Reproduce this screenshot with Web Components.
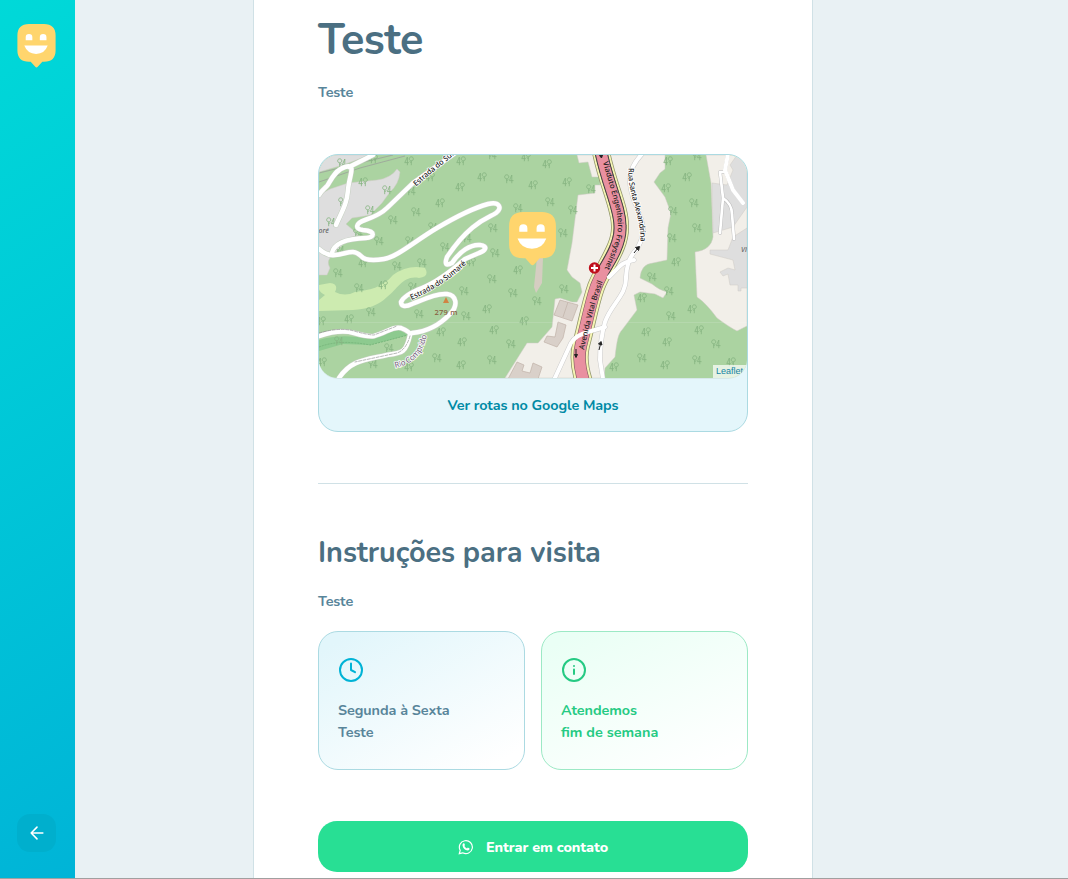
<!DOCTYPE html>
<html lang="pt-BR"><head><meta charset="utf-8"><title>Happy</title>
<style>
html,body{margin:0;height:100%;overflow:hidden}
body{font-family:Nunito,Lato,sans-serif;font-weight:700;font-size:14.4px;letter-spacing:-.07px;color:#58859a;background:#e9f1f4}
</style></head><body>
<happy-app></happy-app>
<script>
const define=(name,html,setup)=>customElements.define(name,class extends HTMLElement{
  constructor(){super();const t=document.createElement('template');t.innerHTML=html;this.attachShadow({mode:'open'}).append(t.content.cloneNode(true));if(setup)setup(this.shadowRoot)}
});

define('happy-face',`<style>:host{display:block}svg{display:block;width:100%;height:100%}</style>
<svg viewBox="0 0 46 53"><path fill="#ffd56d" d="M14 0H32Q46 0 46 14V32Q46 45.500 32 45.500H30L24.500 51.500Q23 53 21.500 51.500L16 45.500H14Q0 45.500 0 32V14Q0 0 14 0Z"/><path fill="#fff" d="M10 19.500V16a4 4 0 0 1 8 0v3.500ZM27 19.500V16a4 4 0 0 1 8 0v3.500ZM8.300 26H36.500Q33 36 22.500 36T8.300 26Z"/></svg>`);

define('side-bar',`<style>:host{display:flex;flex-direction:column;justify-content:space-between;align-items:center;box-sizing:border-box;padding:24px 2px 26px 0;background:linear-gradient(329.540deg,#00b4d7,#00d9d8)}
happy-face{width:39px;height:44px}
button{width:39px;height:38px;border:0;border-radius:13px;background:#00afcd;padding:0;display:grid;place-items:center}
svg{width:20px;height:20px;fill:none;stroke:#fff;stroke-width:1.9;stroke-linecap:round;stroke-linejoin:round}</style>
<happy-face></happy-face><button aria-label="Voltar"><svg viewBox="0 0 24 24"><path d="M19 12H5M12 19l-7-7 7-7"/></svg></button>`);

define('street-map',`<style>:host{display:block;position:relative;height:223px;border-radius:19px;overflow:hidden;border-bottom:1px solid #d6e8ea;letter-spacing:0}
svg{display:block;width:428px;height:223px}
happy-face{position:absolute;left:190px;top:57px;width:47px;height:54px}
a{position:absolute;right:0;bottom:0;height:13px;padding:0 4px 0 3px;background:#ffffffb3;color:#1584a3;font:9px/13px "Liberation Sans",sans-serif}
text{font-family:"Noto Sans",sans-serif;font-weight:500;font-size:7.600px;paint-order:stroke;fill:#222}
.halo{stroke:#fff;stroke-width:1.500px}
.road{fill:none;stroke-linecap:round;stroke-linejoin:round}
</style>
<svg viewBox="319 155 428 223">
<defs>
<g id="a" fill="none" stroke="#86b582" stroke-width=".85"><path d="M-2.300 4.200V-.2M-2.300-.2C-5-.2-5-4.200-2.300-4.200S.4-.2-2.300-.2M-2.300 2L-.8 .3M2.800 4.200V-4L.4 1.600H4.500"/></g>
<g id="b" fill="none" stroke="#86b582" stroke-width=".85"><path d="M2.300 4.200V-.2M2.300-.2C-.4-.2-.4-4.200 2.300-4.200S5-.2 2.300-.2M2.300 2L.8 .3M-1.600 4.200V-4L-4.200 1.600H-.2"/></g>
<path id="p1" d="M416 186.500Q436 169 458 152L475 141"/>
<path id="p2" d="M411.500 300Q445 285 466 264"/>
<path id="p3" d="M395 368Q424 362 427 332"/>
<path id="p4" d="M603 162C609 187 618 206 618 227C617 241 611 254 604 270"/>
<path id="p5" d="M584 350Q592 311 603 281"/>
<path id="p6" d="M628.500 168C627 196 641 212 640.500 243"/>
<g id="left">
<path d="M319 195C322 190 324 189 327 186S333 171 345 167S349 176 348 190S342 211 336 225M349 167L373 155"/>
<path d="M458 151L413 183L387 208Q380 215 365 220C356 223 354 229 363 230C377 231 374 238 366 238Q335 239 332 253"/>
<path d="M319 249Q327 256 335 255C347 254 353 248 361 256Q366 262 384 259C397 257 415 241 437 228S477 207 488 204S503 208 496 213S471 221 447 257Q443 268 452 263C460 251 471 244 480 245S485 251 479 253L465 259Q440 281 422 288T401 302C401 307 406 307 412 304C427 298 438 293 447 294S459 305 450 314Q434 331 412 333"/>
<path d="M319 336Q340 329 354 333T374 336C386 333 393 326 401 328Q411 332 410 335C406 353 402 353 387 355C365 360 351 360 339 378"/>
</g>
<g id="right">
<path d="M642 154C626 171 628 184 635 203C647 230 644 236 637 249Q627 258 626 277C627 295 611 304 605 322Q600 340 600 360L603 379"/>
<path d="M634 260Q624 262 620 266L609 277M554 380L571 343Q576 335 588 332L605 327"/>
</g>
<path id="trunk" d="M601 152C608 186 620 207 620 226C621 247 604 266 596 287C590 304 586 327 581 345Q577 361 584 382"/>
</defs>
<path fill="#abd3a1" d="M319 155H747V378H319Z"/>
<g stroke="#cfcac5" stroke-width=".5">
<path fill="#dedede" d="M319 195L330 189L348 183L377 180Q391 178 397 169L400 172Q399 184 390 192L382 203L370 215Q360 217 352 218L346 224L353 230L358 235L347 240L335 253Q325 260 330 268L327 275H319ZM319 155H370L343 165L319 172Z"/>
<path fill="#f2efe9" d="M577 155L579 163L588 162L592 177H600V185H595V193L578 195L572 243L567 270L572 277L580 283L582 292L577 302H572L560 298L555 299L552 327L538 343H527L505 378H604L605 368L615 357C617 341 618 334 622 330L637 310L634 295L640 292L655 294L663 298L667 292Q659 290 652 284L640 278Q641 264 653 263L667 260L668 228L671 213L665 197L654 182L660 173L665 169V155ZM706 155L711 183L713 237Q711 250 695 252L697 297Q706 303 717 318Q729 327 737 331L747 326V155Z"/>
<path fill="#dedede" d="M712 183L727 185L733 170L730 165L737 155H747V207L733 227L713 233ZM747 228L733 237L728 250H710V254L733 260L735 270L728 268L720 272L723 276L728 274L730 285H738V291H741V288H747Z"/>
</g>
<path fill="#cdebb0" d="M319 285L330 283Q339 284 335 292Q345 297 355 292C369 290 382 288 393 275Q408 264 425 268Q430 277 419 278C403 275 398 289 387 297Q375 309 353 310L319 311V300L325 295Q317 291 319 285Z"/>
<path fill="#8dca8f" d="M319 340Q342 333 370 339L398 329L408 335L390 340L370 345L343 344L319 351Z"/>
<path fill="none" stroke="#78b67c" stroke-width="1" stroke-dasharray="2 1" d="M319 347Q339 339 370 345L408 335"/>
<g fill="none" stroke="#999" stroke-width=".7"><path d="M319 173L360 163L393 155M319 182L360 168L405 156"/></g>
<path fill="#d5cdc1" d="M537 257H543L542 283L536 293L534 287Z"/>
<g fill="#d9d0c9" stroke="#c0b1a8" stroke-width=".7"><path d="M560 300L578 305L572 321L554 315ZM568 302L563 317M558 322L566 325L563 338L557 347L544 342L547 336L555 337ZM517 362L524 365L522 371L530 373L533 363L542 367L538 379H508Z"/></g>
<g id="trees"></g>
<path stroke="#fff" stroke-opacity=".13" d="M319 322.500H747"/>
<g class="road"><use href="#left" stroke="#c4cfc0" stroke-width="5.500"/><use href="#left" stroke="#fff" stroke-width="4.500"/>
<path d="M319 333Q340 327 354 331T374 335L397 326M410 336Q406 350 397 353L355 362" stroke="#888" stroke-width=".6" stroke-dasharray="3 1.500"/>
<use href="#right" stroke="#ccc" stroke-width="5"/>
<use href="#trunk" stroke="#8f936a" stroke-width="18"/><use href="#trunk" stroke="#f5f5b4" stroke-width="16.500"/><use href="#trunk" stroke="#7e5b60" stroke-width="12.500"/><use href="#trunk" stroke="#e990a0" stroke-width="11.300"/>
<g stroke-linecap="butt"><path d="M601 152C608 186 620 207 620 226C621 242 612 257 602 273" stroke="#444" stroke-width="13"/><path d="M601 152C608 186 620 207 620 226C621 242 612 257 601.500 274" stroke="#e990a0" stroke-width="11"/></g>
<use href="#right" stroke="#fff" stroke-width="4"/>
<g stroke="#bbb" stroke-width="3.500"><path id="r" d="M728 154L725 170L733 190L743 203M725 172H720L723 198L720 233M723 198Q732 204 732 214L734 239"/></g><use href="#r" stroke="#fff" stroke-width="2.700"/></g>
<path d="M728 154L725 170L733 190L743 203" class="road" stroke="#fff" stroke-width="4"/>
<text class="halo"><textPath href="#p1" textLength="66">Estrada do Sumaré</textPath></text>
<text class="halo"><textPath href="#p2" textLength="66">Estrada do Sumaré</textPath></text>
<text class="halo" style="fill:#807088;font-size:8px"><textPath href="#p3" textLength="49">Rio Comprido</textPath></text>
<text><textPath href="#p4" textLength="111">Viaduto Engenheiro Freyssinet</textPath></text>
<text><textPath href="#p5" textLength="71">Avenida Vital Brasil</textPath></text>
<text class="halo"><textPath href="#p6" textLength="75">Rua Santa Alexandrina</textPath></text>
<text x="318.500" y="233" style="font-style:italic;fill:#666;font-size:7px">oré</text><text x="741" y="252" style="font-style:italic;fill:#666;font-size:7px">Vi</text>
<path fill="#d08443" d="M443 303L446 297L449 303Z"/><text x="434.500" y="315" textLength="23" style="fill:#88603f">279 m</text>
<g fill="#222" stroke="#222" stroke-width="1"><path d="M634 253L638 248M635.500 247.500L639.500 246.500L638.500 250.500ZM599 350L600.500 344M598.500 344L601 341.500L602 345ZM576 349V355M574.500 354.500L576 357.500L577.500 354.500ZM601 154V157M599.500 155.500L602.500 155L601.500 158Z"/></g>
<circle cx="594.500" cy="268" r="5.700" fill="#bf0d1a"/><path d="M594.500 264.500V271.500M591 268H598" stroke="#fff" stroke-width="2"/>
</svg><happy-face></happy-face><a>Leaflet</a>`,root=>{
 const t='342,163a 373,159b 409,161b 363,182b 387,190a 343,202a 370,210a 331,222a 411,191a 430,177b 440,203b 416,212a 393,220a 358,233a 433,227a 379,241a 410,241a 445,247a 340,250a 363,263b 397,266a 422,263a 458,160b 459,187b 461,161b 492,155a 526,157b 547,164b 482,177b 509,179a 533,185b 567,182b 591,189a 518,208a 550,202a 493,228a 573,210a 563,233a 467,238a 495,253a 471,262b 668,161b 697,156a 687,177b 666,188b 694,203a 673,211a 697,228a 672,238a 676,262b 338,273a 359,288a 383,285b 413,287a 371,312a 349,319b 419,314a 321,321b 441,332b 339,341a 389,348a 322,362b 373,364a 409,367b 437,358a 518,270b 492,279a 464,291a 513,293a 537,301a 564,289a 487,309b 466,316a 524,321b 494,330b 462,342b 511,344a 492,360a 461,365b 652,277a 669,291a 642,298b 671,316a 692,309b 646,332b 699,330b 667,342b 716,344a 642,358a 665,365b 697,360a 614,367b 731,362b'.replace('458,160b 459,187b ','460,187b ');
 root.getElementById('trees').innerHTML=t.split(' ').map(s=>{const [x,y]=s.slice(0,-1).split(',');return `<use href="#${s.slice(-1)}" x="${x}" y="${y}"/>`}).join('');
});

define('map-card',`<style>:host{display:block;box-sizing:border-box;height:278px;border:1px solid #abdae2;border-radius:20px;background:#e4f6fb;overflow:hidden}
footer{height:52px;line-height:52px;text-align:center;color:#008aa5;letter-spacing:-.1px}</style>
<street-map></street-map><footer><slot></slot></footer>`);

define('info-card',`<style>:host{display:block;box-sizing:border-box;height:139px;padding:25px 19px;border:1px solid #abdae2;border-radius:20px;background:linear-gradient(150deg,#e2f6fb 8%,#fff 92%);line-height:22px}
:host([open]){border-color:#9ce9c5;background:linear-gradient(154deg,#eafff5 8%,#fff 91%);color:#25ca83}
svg{display:block;width:26px;height:26px;margin-bottom:16px;fill:none;stroke:#00b3d6;stroke-width:2;stroke-linecap:round;stroke-linejoin:round}
:host([open]) svg{stroke:#25ca83}.i,:host([open]) .c{display:none}:host([open]) .i{display:inline}</style>
<svg viewBox="0 0 26 26"><circle cx="13" cy="13" r="11"/><path class="c" d="M13 6.500V13L17 15.200"/><path class="i" d="M13 12.500V17M13 9V9.100"/></svg><slot></slot>`);

define('contact-button',`<style>:host{display:flex;align-items:center;justify-content:center;gap:12px;box-sizing:border-box;height:51px;border-radius:19px;background:#28df94;color:#fff;font-weight:800}
svg{width:16px;height:16px}</style>
<svg viewBox="0 0 16 16"><path fill="none" stroke="#fff" stroke-width="1.200" d="M1.300 14.700L2.200 11.300A6.500 6.500 0 1 1 4.700 13.800Z"/><path fill="#fff" d="M5.400 4.300H6.200L7 6.100L6.400 7Q7.300 8.700 9 9.400L9.800 8.600L11.600 9.500Q11.700 11.400 9.700 11.500Q5.400 10.900 4.500 6.500Q4.400 5 5.400 4.300Z"/></svg><slot></slot>`);

define('happy-app',`<style>:host{display:grid;grid-template-columns:75px 178px 560px 1fr;height:878px;border-bottom:1px solid #a0a0a0}
main{grid-column:3;box-sizing:border-box;padding:18px 64px 0;border:solid #d0e1e6;border-width:0 1px;background:#fff;overflow:hidden}
h1,h2,p,hr{margin:0}
h1{font-size:43.200px;line-height:44px;height:63px;color:#4b6f82;letter-spacing:-.5px}
p{line-height:22px;letter-spacing:-.15px}h1+p{height:73px}
hr{height:1px;border:0;background:#d0e1e6;margin:51px 0}
h2{font-size:28.800px;line-height:36px;height:55px;color:#4b6f82;letter-spacing:-.04px}
h2+p{height:41px}
.row{display:grid;grid-template-columns:1fr 1fr;gap:16px;margin-bottom:51px}
</style>
<side-bar></side-bar><main>
<h1>Teste</h1><p>Teste</p>
<map-card>Ver rotas no Google Maps</map-card><hr>
<h2>Instruções para visita</h2><p>Teste</p>
<div class="row"><info-card>Segunda à Sexta<br>Teste</info-card><info-card open>Atendemos<br><span style="letter-spacing:0">fim de semana</span></info-card></div>
<contact-button>Entrar em contato</contact-button></main>`);
</script></body></html>
